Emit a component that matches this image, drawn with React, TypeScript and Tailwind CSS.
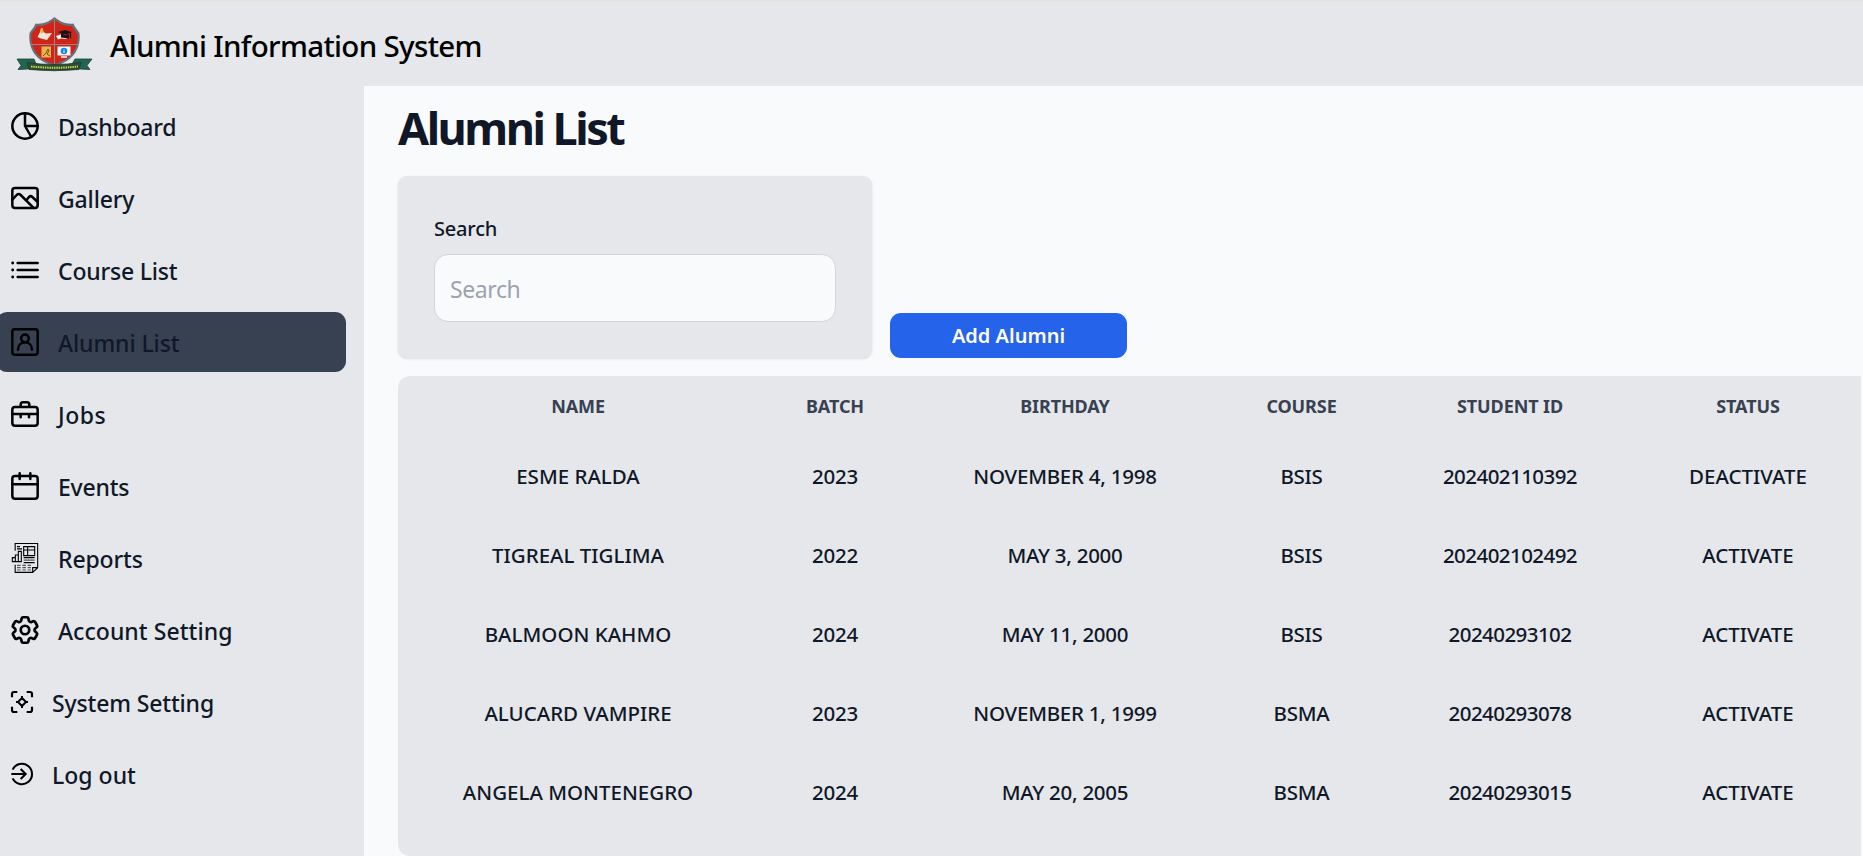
import type { ReactNode } from "react";
import { HiOutlineCog6Tooth } from "react-icons/hi2";

function Glyph({ children, small }: { children: ReactNode; small?: boolean }) {
  return (
    <svg
      viewBox={small ? "0 0 66 66" : "0 0 84 84"}
      className={small ? "size-[22px] shrink-0 overflow-visible" : "size-7 shrink-0 overflow-visible"}
      fill="none"
      stroke="#000"
      strokeWidth={7.5}
      strokeLinecap="round"
      strokeLinejoin="round"
    >
      {children}
    </svg>
  );
}

const PieIcon = (
  <Glyph>
    <circle cx="42" cy="42" r="38" />
    <path d="M42 4v38h38M42 42l19 33" />
  </Glyph>
);

const GalleryIcon = (
  <Glyph>
    <rect x="4" y="12" width="76" height="60" rx="8" />
    <path d="M4 47 17 33q6-6 12 0l38 38M46 49l8-10q5-5 10 0l16 15" />
  </Glyph>
);

const ListIcon = (
  <Glyph>
    <path d="M20 21h60M20 42h60M20 63h60" />
    <path d="M5 21h.1M5 42h.1M5 63h.1" strokeWidth={8.5} />
  </Glyph>
);

const UserIcon = (
  <Glyph>
    <rect x="4" y="4" width="76" height="76" rx="7" />
    <circle cx="42" cy="31" r="11.5" />
    <path d="M21 65c0-12 8-22 21-22s21 10 21 22" />
  </Glyph>
);

const JobsIcon = (
  <Glyph>
    <rect x="4" y="21" width="76" height="56" rx="8" />
    <path d="M29 20v-6q0-7 7-7h12q7 0 7 7v6M4 42h76M29 42v10M54 42v10" />
  </Glyph>
);

const EventsIcon = (
  <Glyph>
    <rect x="4" y="12" width="76" height="68" rx="8" />
    <path d="M4 37h76M26 4v17M58 4v17" />
  </Glyph>
);

const ReportsIcon = (
  <Glyph>
    <g strokeWidth={3.3} strokeLinecap="butt" strokeLinejoin="miter">
      <path d="M12.500 20V-1.500H80V71L65 85H12.500V62M65 85V71h15" />
      <path d="M18 8h9M18 14.500h15M38 8h33v27H38zM50 8v27M38 18h33" />
      <path d="M4 41h9v12H4zM13 33h9v20h-9zM22 22h9v31h-9z" />
      <path d="M38 41h33M38 56h33" />
      <path
        d="M38 48.500h33M18 64h11M34 64h11M50 64h10M18 71h11M34 71h11M50 71h10M18 78h11M34 78h11M50 78h10"
        stroke="#555"
      />
    </g>
  </Glyph>
);

const GearIcon = (
  <span className="flex size-7 shrink-0 items-center justify-center">
    <HiOutlineCog6Tooth className="size-[34px] shrink-0 text-black [&_path]:stroke-[1.9]" />
  </span>
);

const SystemIcon = (
  <Glyph small>
    <path d="M3 19V9q0-6 6-6h10M47 3h10q6 0 6 6v10M63 47v10q0 6-6 6H47M19 63H9q-6 0-6-6V47" strokeWidth={6.5} strokeLinecap="butt" />
    <path d="M33 21 45 33 33 45 21 33zM33 15v5M33 46v5M15 33h5M46 33h5" strokeWidth={6} strokeLinecap="butt" />
  </Glyph>
);

const LogoutIcon = (
  <Glyph small>
    <path
      d="M5 20a30.500 30.500 0 1 1 0 26M1 33h42M29 18l15 15-15 15"
      strokeWidth={6.2}
      strokeLinecap="butt"
      strokeLinejoin="miter"
    />
  </Glyph>
);

const menu = [
  { label: "Dashboard", icon: PieIcon, tracking: "tracking-[-0.27px]" },
  { label: "Gallery", icon: GalleryIcon, tracking: "tracking-[-0.15px]" },
  { label: "Course List", icon: ListIcon, tracking: "tracking-[-0.2px]" },
  { label: "Alumni List", icon: UserIcon, tracking: "tracking-[-0.1px]", active: true },
  { label: "Jobs", icon: JobsIcon, tracking: "tracking-[0.5px]" },
  { label: "Events", icon: EventsIcon, tracking: "tracking-[-0.2px]" },
  { label: "Reports", icon: ReportsIcon, tracking: "tracking-[-0.15px]" },
  { label: "Account Setting", icon: GearIcon, tracking: "tracking-[0.05px]" },
  { label: "System Setting", icon: SystemIcon, tracking: "tracking-[-0.15px]" },
  { label: "Log out", icon: LogoutIcon, tracking: "tracking-normal" },
];

const columns = ["Name", "Batch", "Birthday", "Course", "Student ID", "Status"];

const cellTracking = [
  "tracking-normal",
  "tracking-[-0.25px]",
  "tracking-[-0.25px]",
  "tracking-[-0.25px]",
  "tracking-[-0.55px]",
  "tracking-normal",
];

const rows = [
  ["ESME RALDA", "2023", "NOVEMBER 4, 1998", "BSIS", "202402110392", "DEACTIVATE"],
  ["TIGREAL TIGLIMA", "2022", "MAY 3, 2000", "BSIS", "202402102492", "ACTIVATE"],
  ["BALMOON KAHMO", "2024", "MAY 11, 2000", "BSIS", "20240293102", "ACTIVATE"],
  ["ALUCARD VAMPIRE", "2023", "NOVEMBER 1, 1999", "BSMA", "20240293078", "ACTIVATE"],
  ["ANGELA MONTENEGRO", "2024", "MAY 20, 2005", "BSMA", "20240293015", "ACTIVATE"],
];

function Crest() {
  return (
    <svg viewBox="14 14 80 60" className="h-[60px] w-20 shrink-0">
      <path d="M17 59h17l3 7-9 3-10 .5 3-4zM92 59H75l-4 7 9 3 10 .5-3-4z" fill="#1f6650" stroke="#22403a" strokeWidth=".8" />
      <path d="M54.500 17C49 22 42 24.500 35.500 23.500 34 28 31 30 29.500 33 28 47 34 61 54.500 66 75 61 81 47 79.500 33 78 30 75 28 73.500 23.500 67 24.500 60 22 54.500 17z" fill="#66717c" />
      <path d="M54.500 19.500C49 24.500 42.500 26.500 37 26 35.500 29.500 33 31.500 31.500 34 30.500 47 36 59 54.500 64 73 59 78.500 47 77.500 34 76 31.500 73.500 29.500 72 26 66.500 26.500 60 24.500 54.500 19.500z" fill="#cf2417" />
      <path d="M54.500 19v45M31 44.500h47" stroke="#93878a" strokeWidth="1" />
      <path d="m37.500 37 3-6 2-1 1 2 2.500 1.500 6-.5-5 7-6-1.500z" fill="#f7e6d8" />
      <path d="m40 30 1.500-2.500 1.500 1 .5 4-2 1z" fill="#f0b04c" />
      <path d="m56 36 6-2 2 2 5 0-3 3-5-.5-3 1z" fill="#f2eeee" />
      <path d="m58 32 7-2 6.500 2-6 3zM61 33.500v4l8 1v-4z" fill="#15161a" />
      <path d="M70.500 32v6" stroke="#15161a" strokeWidth="1.200" />
      <rect x="41.500" y="46.500" width="9.500" height="11" fill="#e9b54a" />
      <path d="m43 56 3-3 2-4 1 2-2 3 3 2" fill="none" stroke="#6e5120" strokeWidth="1" />
      <rect x="57.500" y="46.500" width="13" height="9" fill="#f4f8fc" />
      <path d="M61 57h6" stroke="#f4f8fc" strokeWidth="1.500" />
      <circle cx="64" cy="51" r="3.300" fill="#1689d8" />
      <path d="M64 50.500v2.500M64 49v.6" stroke="#fff" strokeWidth="1" />
      <path d="M27 62.500q27 4 54 0l-2 7q-25 2.500-50 0z" fill="#2b4d30" stroke="#1f3a2c" strokeWidth=".8" />
      <path d="M31 66.500q24 2.500 47 0" fill="none" stroke="#c9cf5a" strokeWidth="2" strokeDasharray="1.500 .8" />
    </svg>
  );
}

export default function App() {
  return (
    <div className="flex h-[856px] w-full flex-col overflow-hidden bg-[#e5e7eb] font-['Noto_Sans',sans-serif] text-gray-900">
      <header className="flex h-[86px] shrink-0 items-center border-t-2 border-[#e2e4e0] pl-3.5">
        <Crest />
        <h1 className="ml-4 pt-[3px] text-[29.500px] leading-10 font-[550] tracking-[-0.66px] whitespace-nowrap text-black">
          Alumni Information System
        </h1>
      </header>

      <div className="flex min-h-0 flex-1">
        <nav className="flex w-[364px] shrink-0 flex-col gap-3 pt-2.5">
          {menu.map((item) => (
            <a
              key={item.label}
              className={`-ml-1 flex h-[60px] w-[350px] shrink-0 items-center rounded-[11px] pl-[15px] ${item.active ? "bg-[#374151]" : ""}`}
            >
              {item.icon}
              <span className={`ml-[19px] pt-px text-[23px] leading-8 font-medium whitespace-nowrap ${item.tracking}`}>
                {item.label}
              </span>
            </a>
          ))}
        </nav>

        <main className="flex min-w-0 flex-1 flex-col bg-[#f9fafc] pl-[34px]">
          <h2 className="mt-[15px] h-[75px] text-[45px] leading-[54px] font-bold tracking-[-2.500px] whitespace-nowrap">
            Alumni List
          </h2>

          <div className="flex items-end gap-[18px]">
            <section className="flex h-[182px] w-[474px] flex-col rounded-[9px] bg-[#e5e7eb] px-9 pt-9 shadow">
              <label className="pt-px text-[20px] leading-8 font-medium tracking-[-0.2px]">Search</label>
              <input
                placeholder="Search"
                className="mt-[9px] h-[68px] w-[402px] rounded-[14px] border border-[#d1d5db] bg-[#f9fafc] px-[15px] pt-0.5 text-[23px] tracking-[-0.4px] placeholder:text-[#9ca3af]"
              />
            </section>
            <button className="h-[45px] w-[237px] rounded-[11px] bg-[#2563eb] text-[20px] font-semibold text-white">
              Add Alumni
            </button>
          </div>

          <div className="mt-[18px] mr-0.5 h-[480px] shrink-0 rounded-l-[12px] bg-[#e5e7eb]">
            <div className="grid h-[61px] grid-cols-[360px_154px_306px_167px_250px_226px] items-center text-center text-[18px] font-bold tracking-[-0.1px] text-[#374151] uppercase">
              {columns.map((column) => (
                <span key={column}>{column}</span>
              ))}
            </div>
            {rows.map((row) => (
              <div
                key={row[0]}
                className="grid h-[79px] grid-cols-[360px_154px_306px_167px_250px_226px] items-center text-center text-[20.500px] font-medium"
              >
                {row.map((cell, index) => (
                  <span key={index} className={cellTracking[index]}>
                    {cell}
                  </span>
                ))}
              </div>
            ))}
          </div>
        </main>
      </div>
    </div>
  );
}
